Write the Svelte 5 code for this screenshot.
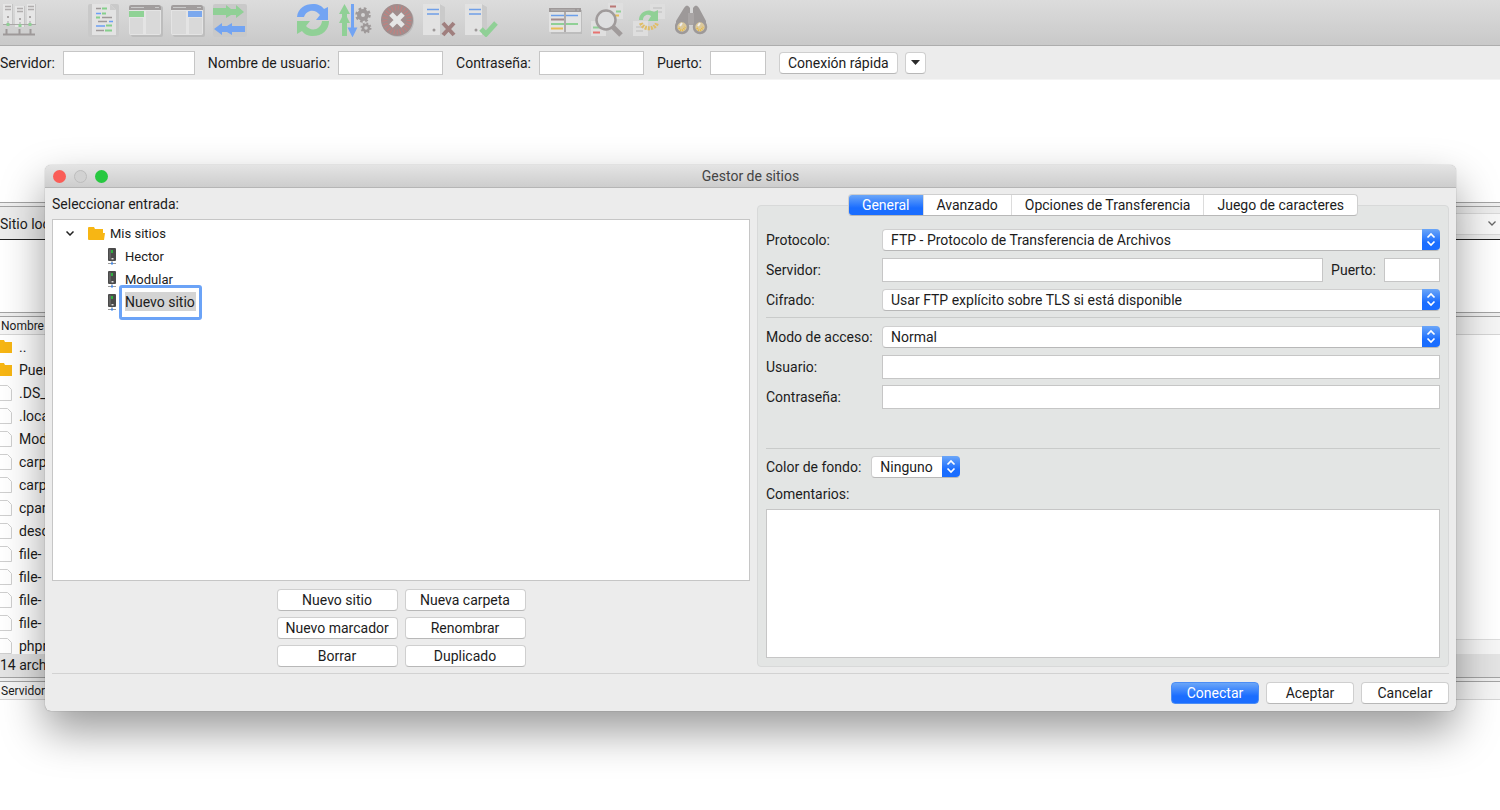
<script>
  const folders = ['..', 'Puer'];
  const files = ['.DS_', '.loca', 'Mod', 'carp', 'carp', 'cpan', 'desc', 'file-', 'file-', 'file-', 'file-', 'phpr'];
  const sites = ['Hector', 'Modular'];
  const tabs = ['General', 'Avanzado', 'Opciones de Transferencia', 'Juego de caracteres'];
  const siteActions = ['Nuevo sitio', 'Nueva carpeta', 'Nuevo marcador', 'Renombrar', 'Borrar', 'Duplicado'];

  let activeTab = $state('General');
  let siteName = $state('Nuevo sitio');
</script>

{#snippet updown()}
  <span class="updown">
    <svg viewBox="0 0 18 21" width="18" height="21" fill="none" stroke="#fff" stroke-width="1.700">
      <path d="m5.500 8.500 3.500-3.500 3.500 3.500M5.500 12.500 9 16l3.500-3.500" />
    </svg>
  </span>
{/snippet}

{#snippet serverIcon()}
  <svg class="server-icon" viewBox="0 0 10 17" width="10" height="17">
    <rect x="1" y="0" width="8" height="13" rx="1" fill="#4a4a4a" />
    <path d="M2.500 1.500h1v10h-1z" fill="#777" />
    <rect x="4" y="2" width="2" height="3" fill="#2fae3f" />
    <rect x="4.500" y="10" width="2" height="1.500" fill="#ddd" />
    <path d="M5 13v2M1 15.500h8" stroke="#999" />
    <rect x="4" y="14.500" width="2" height="2" fill="#4287e8" />
  </svg>
{/snippet}

<div class="app">
  <header class="toolbar">
    <div class="tools">
      <button aria-label="Gestor de sitios">
        <svg viewBox="0 0 34 34">
          <path d="M0 1h10v21H0zM12 3h10v21H12zM24 1h9v21h-9z" fill="#e6e6e6" />
          <path d="M9 1h1v21H9zM21 3h1v21h-1zM32 1h1v21h-1z" fill="#c5c5c5" />
          <path d="M2 3.500h6M2 6.500h6M14 5.500h6M14 8.500h6M25 3.500h6M25 6.500h6" stroke="#b0adad" stroke-width="1.500" />
          <path d="M5 18v4M17 19v4M27 18v4M0 21.500h33" stroke="#aaa7a7" />
          <path d="M4 13h2v2H4zM16 15h2v2h-2zM26 13h2v2h-2z" fill="#aaa7a7" />
          <path d="M3.500 20h3v3h-3zM15.500 21h3v3h-3zM25.500 20h3v3h-3z" fill="#90d096" />
          <path d="M0 31.500h32M3.500 26v5M16.500 26v5M27.500 26v5" stroke="#9e9999" stroke-width="2" />
        </svg>
      </button>
    </div>
    <div class="tools">
      <button aria-label="Registro de mensajes">
        <svg viewBox="0 0 34 34">
          <rect x="1" y="1" width="31" height="33" rx="2" fill="#c9c9c9" />
          <path d="M5 1h18l6 6v25H5z" fill="#e3e3e3" />
          <path d="M23 1v6h6z" fill="#cdcdcd" />
          <g fill="none" stroke-width="1.500">
            <path d="M9 5.500h5M11 18.500h9M15 14.500h10" stroke="#9e9999" />
            <path d="M15 5.500h5M15 10.500h4M19 22.500h6M9 14.500h4M18 27.500h7" stroke="#86cf8c" stroke-width="2" />
            <path d="M9 10.500h5M9 23h9M22 18.500h4" stroke="#6ca0f4" />
            <path d="M9 27.500h8" stroke="#9e9999" />
          </g>
        </svg>
      </button>
      <button aria-label="Árbol local">
        <svg viewBox="0 0 34 34">
          <rect x="2" y="3" width="32" height="31" rx="2" fill="#bdbdbd" />
          <rect y="2" width="32" height="30" rx="2" fill="#e4e4e4" />
          <path d="M0 7V4q0-2 2-2h28q2 0 2 2v3z" fill="#a19d9d" />
          <path d="M2 4.500h13M26 4.500h4" stroke="#c9c9c9" />
          <path d="M1 15h13v16H1zM17 8h14v23H17z" fill="#d9d9d9" />
          <path d="M0 8h15v6H0z" fill="#8fd295" />
        </svg>
      </button>
      <button aria-label="Árbol remoto">
        <svg viewBox="0 0 34 34">
          <rect x="2" y="3" width="32" height="31" rx="2" fill="#bdbdbd" />
          <rect y="2" width="32" height="30" rx="2" fill="#e4e4e4" />
          <path d="M0 7V4q0-2 2-2h28q2 0 2 2v3z" fill="#a19d9d" />
          <path d="M2 4.500h13M26 4.500h4" stroke="#c9c9c9" />
          <path d="M1 8h14v23H1zM18 15h13v16H18z" fill="#d9d9d9" />
          <path d="M17 8h14v6H17z" fill="#7ba8ee" />
        </svg>
      </button>
      <button aria-label="Cola de transferencias">
        <svg viewBox="0 0 34 34">
          <rect y="1" width="34" height="33" rx="2" fill="#c9c9c9" />
          <path d="M0 5h13V2l5 4h5V2l8 7-8 6v-3h-5l-5 3v-3H0z" fill="#90d096" />
          <path d="M32 23H19v-3l-5 3H9v-3l-8 6 8 6v-3h5l5 3v-3h13z" fill="#73a4f2" />
        </svg>
      </button>
    </div>
    <div class="tools">
      <button aria-label="Actualizar">
        <svg viewBox="0 0 34 34">
          <path d="M0 14C1 5 8 1 16 1c5 0 9 2 11 5l4-2v13H19l4-5c-5-7-14-5-16 2z" fill="#72a4f3" />
          <path d="M32 18c0 9-7 15-16 15-5 0-9-2-11-5l-5 3V18h13l-4 5c5 6 15 4 16-5z" fill="#90d096" />
        </svg>
      </button>
      <button aria-label="Procesar cola">
        <svg viewBox="0 0 34 34">
          <path d="M3 33V20H0l3-6v-3H0L5.500 1 11 11H8v3l3 6H8v13z" fill="#90d096" />
          <path d="M13.500 1v25M11 26l2.500 5 2.500-5z" stroke="#72a4f3" stroke-width="3" fill="#72a4f3" />
          <g fill="none" stroke="#9e9999">
            <circle cx="24" cy="12" r="4" stroke-width="4" />
            <circle cx="24" cy="12" r="6.500" stroke-width="2.500" stroke-dasharray="2.600 2.500" />
            <circle cx="27" cy="25" r="3" stroke-width="2.500" />
            <circle cx="27" cy="25" r="4.500" stroke-width="2" stroke-dasharray="1.800 1.700" />
          </g>
        </svg>
      </button>
      <button aria-label="Cancelar operación">
        <svg viewBox="0 0 34 34">
          <circle cx="17" cy="18" r="16" fill="#bcbcbc" />
          <circle cx="16" cy="17" r="16" fill="#a08d8d" />
          <circle cx="16" cy="17" r="12" fill="none" stroke="#c57f7d" stroke-width="5" stroke-dasharray="1 2" />
          <path d="m10 11 12 12m0-12L10 23" stroke="#e6e6e6" stroke-width="5" />
        </svg>
      </button>
      <button aria-label="Desconectar">
        <svg viewBox="0 0 34 34">
          <path d="M0 1h18l4 3v28H0z" fill="#e2e2e2" />
          <path d="M17 1l5 3v28h-5z" fill="#cacaca" />
          <path d="M4 6.500h12M4 11h12" stroke="#6f9fe8" stroke-width="1.500" />
          <circle cx="11" cy="27" r="1.500" fill="#9e9999" />
          <path d="m20 20 11 12m0-12L20 32" stroke="#a07f7e" stroke-width="4" />
        </svg>
      </button>
      <button aria-label="Reconectar">
        <svg viewBox="0 0 34 34">
          <path d="M0 1h18l4 3v28H0z" fill="#e2e2e2" />
          <path d="M17 1l5 3v28h-5z" fill="#cacaca" />
          <path d="M4 6.500h12M4 11h12" stroke="#6f9fe8" stroke-width="1.500" />
          <circle cx="11" cy="27" r="1.500" fill="#9e9999" />
          <path d="m16 26 5 5 10-11" fill="none" stroke="#90d096" stroke-width="5" />
        </svg>
      </button>
    </div>
    <div class="tools">
      <button aria-label="Comparar directorios">
        <svg viewBox="0 0 34 34">
          <rect x="2" y="7" width="31" height="24" fill="#bdbdbd" />
          <rect y="5" width="32" height="24" rx="1" fill="#e3e3e3" />
          <path d="M0 5h32v4H0z" fill="#9e9999" />
          <path d="M2 7h24M28 7h2" stroke="#bcb9b9" />
          <path d="M2 12.500h13M17 12.500h12" stroke="#6c9fea" stroke-width="1.500" />
          <path d="M2 16.500h13" stroke="#a38b8b" stroke-width="2" />
          <path d="M2 21h13M17 21h12" stroke="#90d096" stroke-width="2" />
          <path d="M2 25.500h12" stroke="#e7bd56" stroke-width="2" />
          <path d="M16 8v21" stroke="#9e9999" stroke-width="1.500" />
        </svg>
      </button>
      <button aria-label="Filtros de directorio">
        <svg viewBox="0 0 34 34">
          <path d="M17 0h15v16H17zM0 18h15v15H0z" fill="#dfdfdf" />
          <path d="M19 3.500h6" stroke="#ba7775" stroke-width="2" />
          <path d="M25 8.500h5M2 24.500h8" stroke="#90d096" stroke-width="2" />
          <path d="M24 12.500h4" stroke="#e7bd56" stroke-width="2" />
          <path d="M2 29.500h7" stroke="#e77370" stroke-width="2" />
          <circle cx="15" cy="17" r="9.500" fill="#dededf" stroke="#a09b9b" stroke-width="2.500" />
          <path d="m22 24 8 8" stroke="#a09b9b" stroke-width="5" />
        </svg>
      </button>
      <button aria-label="Navegación sincronizada">
        <svg viewBox="0 0 34 34">
          <path d="M17 1h15v15H17zM0 18h15v15H0z" fill="#dedede" />
          <path d="M20 5h9M20 9h9M3 24h7M3 28h7" stroke="#c8c8c8" stroke-width="1.500" />
          <path d="M6 17C6 9 15 5 21 9l4-2v11H15l3-5c-4-3-8 0-8 4z" fill="#90d096" />
          <path d="M8 20c2 7 14 7 16 0" fill="none" stroke="#e0bd67" stroke-width="4" stroke-dasharray="2 1" />
        </svg>
      </button>
      <button aria-label="Buscar archivos">
        <svg viewBox="0 0 34 34">
          <path d="M9 5q3-5 6 0v17H1v-4zM24 5q-3-5-6 0v17h13v-4z" fill="#9d9999" />
          <path d="M13 10h6v12h-6z" fill="#a9a5a5" />
          <circle cx="7" cy="24" r="6" fill="#dcc99b" stroke="#9d9999" stroke-width="2.500" />
          <circle cx="25" cy="24" r="6" fill="#dcc99b" stroke="#9d9999" stroke-width="2.500" />
          <path d="M4 25q3 5 6-1M22 25q3 5 6-1" fill="none" stroke="#e8b83e" stroke-width="2" stroke-dasharray="1 1" />
          <path d="m5 23 2-3m16 3 2-3" stroke="#eee" stroke-width="2" />
        </svg>
      </button>
    </div>
  </header>

  <form class="quickbar">
    <label>Servidor: <input class="host" type="text" /></label>
    <label>Nombre de usuario: <input class="user" type="text" /></label>
    <label>Contraseña: <input class="user" type="password" /></label>
    <label>Puerto: <input class="port" type="text" /></label>
    <div class="quick-buttons">
      <button class="btn quick" type="button">Conexión rápida</button>
      <button class="btn history" type="button" aria-label="Conexiones recientes">
        <svg viewBox="0 0 9 5" width="9" height="5"><path d="M0 0h9L4.500 5z" fill="#2b2b2b" /></svg>
      </button>
    </div>
  </form>

  <div class="log"></div>

  <main class="panes">
    <section class="pane">
      <div class="site-bar"><span>Sitio loc</span></div>
      <div class="dir-tree"></div>
      <div class="list-head">Nombre</div>
      <ul class="files">
        {#each folders as name}
          <li>
            <svg viewBox="0 0 12 14" width="12" height="14"><path d="M0 0h4l1 2h7v11H0z" fill="#f7b614" /></svg>
            {name}
          </li>
        {/each}
        {#each files as name}
          <li>
            <svg viewBox="0 0 12 16" width="12" height="16"><path d="M0 .5h7.500l4 4v11H0" fill="#fff" stroke="#cfcfcf" /></svg>
            {name}
          </li>
        {/each}
      </ul>
      <div class="status">14 arch</div>
    </section>
    <section class="pane">
      <div class="site-bar remote">
        <button class="combo" aria-label="Sitio remoto">
          <svg viewBox="0 0 8 5" width="8" height="5"><path d="m.5.500 3.500 3.500L7.500.500" fill="none" stroke="#666" stroke-width="1.300" /></svg>
        </button>
      </div>
      <div class="dir-tree"></div>
      <div class="list-head"></div>
      <div class="files remote-files"></div>
      <div class="status"></div>
    </section>
  </main>

  <div class="queue-head">Servidor</div>

  <div class="dialog" role="dialog" aria-labelledby="dialog-title">
    <div class="titlebar">
      <div class="lights">
        <button class="light close" aria-label="Cerrar"></button>
        <button class="light minimize" aria-label="Minimizar" disabled></button>
        <button class="light zoom" aria-label="Ampliar"></button>
      </div>
      <h1 id="dialog-title">Gestor de sitios</h1>
    </div>

    <div class="dialog-body">
      <section class="entries">
        <h2>Seleccionar entrada:</h2>
        <div class="tree">
          <div class="node root">
            <svg viewBox="0 0 8 5" width="8" height="5"><path d="m.5.500 3.500 3.500L7.500.500" fill="none" stroke="#222" stroke-width="1.500" /></svg>
            <svg class="folder" viewBox="0 0 17 14" width="17" height="14">
              <path d="M0 1q0-1 1-1h5l1 2h8v4h2l-1 7H1q-1 0-1-1z" fill="#f7b614" />
            </svg>
            Mis sitios
          </div>
          <ul>
            {#each sites as site}
              <li class="node">{@render serverIcon()}<span>{site}</span></li>
            {/each}
            <li class="node editing">
              {@render serverIcon()}
              <input type="text" aria-label="Nombre del sitio" bind:value={siteName} />
            </li>
          </ul>
        </div>
        <div class="site-actions">
          {#each siteActions as action}
            <button class="btn">{action}</button>
          {/each}
        </div>
      </section>

      <section class="settings">
        <div class="tabs" role="tablist">
          {#each tabs as tab}
            <button role="tab" class:active={tab === activeTab} aria-selected={tab === activeTab} onclick={() => (activeTab = tab)}>{tab}</button>
          {/each}
        </div>
        <div class="panel" role="tabpanel">
          <div class="fields">
            <label for="protocol">Protocolo:</label>
            <div class="select">
              <select id="protocol"><option>FTP - Protocolo de Transferencia de Archivos</option></select>
              {@render updown()}
            </div>
            <label for="host">Servidor:</label>
            <div class="host-row">
              <input id="host" type="text" />
              <label for="port">Puerto:</label>
              <input id="port" class="port" type="text" />
            </div>
            <label for="encryption">Cifrado:</label>
            <div class="select">
              <select id="encryption"><option>Usar FTP explícito sobre TLS si está disponible</option></select>
              {@render updown()}
            </div>
          </div>
          <hr />
          <div class="fields login">
            <label for="logon">Modo de acceso:</label>
            <div class="select">
              <select id="logon"><option>Normal</option></select>
              {@render updown()}
            </div>
            <label for="user">Usuario:</label>
            <input id="user" type="text" />
            <label for="password">Contraseña:</label>
            <input id="password" type="password" />
          </div>
          <hr />
          <div class="color-row">
            <label for="color">Color de fondo:</label>
            <div class="select small">
              <select id="color"><option>Ninguno</option></select>
              {@render updown()}
            </div>
          </div>
          <label class="comments-label" for="comments">Comentarios:</label>
          <textarea id="comments"></textarea>
        </div>
      </section>
    </div>

    <footer>
      <button class="btn primary">Conectar</button>
      <button class="btn">Aceptar</button>
      <button class="btn">Cancelar</button>
    </footer>
  </div>
</div>

<style>
  :global(body) {
    margin: 0;
    background: #fff;
  }

  .app {
    position: relative;
    min-height: 100vh;
    overflow: hidden;
    font-family: Roboto, 'Liberation Sans', sans-serif;
    font-size: 14px;
    line-height: 20px;
    color: #1c1c1c;
  }

  .app *, .app {
    box-sizing: border-box;
  }

  button, input, select, textarea {
    font: inherit;
    color: inherit;
    margin: 0;
  }

  ul {
    list-style: none;
    margin: 0;
    padding: 0;
  }

  /* Barra de herramientas */
  .toolbar {
    display: flex;
    gap: 50px;
    height: 46px;
    padding: 3px;
    background: linear-gradient(#dcdcdc, #c9c9c9);
    border-bottom: 1px solid #adadad;
  }

  .tools {
    display: flex;
    gap: 8px;
  }

  .tools button {
    width: 34px;
    height: 34px;
    padding: 0;
    border: 0;
    background: none;
  }

  .tools svg {
    display: block;
    width: 34px;
    height: 34px;
  }

  /* Conexión rápida */
  .quickbar {
    display: flex;
    align-items: center;
    gap: 13px;
    height: 34px;
    background: #ececec;
    border-bottom: 1px solid #f4f4f4;
  }

  .quickbar label {
    display: flex;
    align-items: center;
    gap: 8px;
    white-space: nowrap;
  }

  input[type='text'], input[type='password'] {
    height: 24px;
    padding: 0 6px;
    border: 1px solid #c6c6c6;
    background: #fff;
    outline: none;
  }

  .quickbar .host { width: 132px; }
  .quickbar .user { width: 105px; }
  .port { width: 56px; }

  .quick-buttons {
    display: flex;
    gap: 7px;
  }

  .btn {
    height: 22px;
    padding: 0 8px;
    border: 1px solid #cfcfcf;
    border-bottom-color: #b8b8b8;
    border-radius: 4px;
    background: #fff;
    line-height: 18px;
    white-space: nowrap;
  }

  .quick {
    width: 119px;
    padding: 0;
  }

  .history {
    display: flex;
    align-items: center;
    justify-content: center;
    width: 21px;
    padding: 0;
  }

  .log {
    height: 122px;
  }

  /* Paneles local y remoto */
  .panes {
    display: flex;
  }

  .pane {
    flex: 1;
    min-width: 0;
  }

  .site-bar {
    display: flex;
    align-items: center;
    height: 38px;
    padding-top: 5px;
    border-top: 1px solid #a3a3a3;
    border-bottom: 1px solid #222;
    background: linear-gradient(#efefef 3px, #a3a3a3 3px, #a3a3a3 4px, #ececec 4px);
  }

  .remote {
    justify-content: flex-end;
  }

  .combo {
    display: flex;
    align-items: center;
    justify-content: flex-end;
    width: 80%;
    height: 22px;
    padding: 0 4px;
    border: 1px solid #d8d8d8;
    border-right: 0;
    background: #f7f7f7;
  }

  .dir-tree {
    height: 72px;
  }

  .list-head, .queue-head {
    height: 23px;
    padding: 5px 1px 0;
    border-top: 1px solid #a3a3a3;
    border-bottom: 1px solid #d5d5d5;
    background: linear-gradient(#efefef 3px, #a3a3a3 3px, #a3a3a3 4px, #f5f5f5 4px);
    font-size: 12px;
    line-height: 17px;
  }

  .files {
    height: 319px;
    overflow: hidden;
  }

  .files li {
    display: flex;
    align-items: center;
    gap: 7px;
    height: 23px;
  }

  .remote-files {
    background: linear-gradient(#fff 304px, #ddd 304px, #ddd 305px, #f6f6f6 305px);
  }

  .status {
    height: 23px;
    padding: 1px 0;
    background: #e4e4e4;
  }

  /* Gestor de sitios */
  .dialog {
    position: absolute;
    top: 165px;
    left: 45px;
    right: 44px;
    border-radius: 6px;
    background: #ececec;
    box-shadow: 0 0 1px rgba(0, 0, 0, 0.5), 0 20px 44px rgba(0, 0, 0, 0.4);
  }

  .titlebar {
    display: grid;
    grid-template-columns: 1fr auto 1fr;
    align-items: center;
    height: 23px;
    padding: 0 8px;
    border-bottom: 1px solid #b5b5b5;
    border-radius: 6px 6px 0 0;
    background: linear-gradient(#e4e4e4, #cdcdcd);
  }

  .lights {
    display: flex;
    gap: 8px;
  }

  .light {
    width: 13px;
    height: 13px;
    padding: 0;
    border: 0;
    border-radius: 50%;
  }

  .close { background: #fa5d57; }
  .minimize { background: #d2d2d2; border: 1px solid #bdbdbd; }
  .zoom { background: #27c840; }

  h1, h2 {
    margin: 0;
    font-size: 14px;
    font-weight: 400;
  }

  h1 {
    color: #444;
  }

  .dialog-body {
    display: grid;
    grid-template-columns: 698fr 692fr;
    gap: 7px;
    margin: 0 7px;
    padding: 6px 0;
    border-bottom: 1px solid #d2d2d2;
  }

  .entries {
    display: flex;
    flex-direction: column;
  }

  .tree {
    flex: 1;
    min-height: 362px;
    margin-top: 5px;
    padding: 2px 13px;
    border: 1px solid #c6c6c6;
    background: #fff;
  }

  .node {
    display: flex;
    align-items: center;
    gap: 8px;
    height: 23px;
    font-size: 13px;
  }

  .root {
    gap: 5px;
  }

  .root .folder {
    margin-left: 9px;
  }

  .tree ul {
    padding-left: 41px;
  }

  .editing {
    gap: 2px;
    font-size: 14px;
  }

  .editing input[type='text'] {
    width: 83px;
    height: 35px;
    padding: 4px 3px 6px;
    border: 3px solid #6ba3f7;
    border-radius: 3px;
    background: linear-gradient(#d4d4d4, #d4d4d4) content-box, #fff;
  }

  .site-actions {
    display: grid;
    grid-template-columns: 121px 121px;
    justify-content: center;
    gap: 6px 7px;
    margin-top: 8px;
  }

  .settings {
    display: flex;
    flex-direction: column;
  }

  .tabs {
    z-index: 1;
    display: flex;
    align-self: center;
    height: 22px;
    border: 1px solid #cfcfcf;
    border-bottom-color: #b8b8b8;
    border-radius: 4px;
    background: #fff;
    overflow: hidden;
  }

  .tabs button {
    padding: 0 13px;
    border: 0;
    border-left: 1px solid #dcdcdc;
    background: none;
    white-space: nowrap;
  }

  .tabs button:first-child {
    border-left: 0;
  }

  .tabs .active, .primary {
    background: linear-gradient(#6ba6f8, #1a6dff 65%);
    color: #fff;
  }

  .panel {
    flex: 1;
    display: flex;
    flex-direction: column;
    margin-top: -11px;
    padding: 22px 8px 8px;
    border: 1px solid #d8d9d9;
    border-radius: 4px;
    background: #e3e5e4;
  }

  .fields {
    display: grid;
    grid-template-columns: 116px 1fr;
    grid-auto-rows: 24px;
    align-items: center;
    row-gap: 6px;
  }

  .host-row {
    display: flex;
    align-items: center;
    gap: 8px;
  }

  #host {
    flex: 1;
    min-width: 0;
  }

  hr {
    width: 100%;
    margin: 5px 0 7px;
    border: 0;
    border-top: 1px solid #c9cbca;
  }

  .login {
    padding-bottom: 34px;
  }

  .select {
    position: relative;
    display: flex;
  }

  select {
    width: 100%;
    height: 22px;
    padding: 0 24px 0 8px;
    border: 1px solid #cfcfcf;
    border-bottom-color: #b8b8b8;
    border-radius: 4px;
    background: #fff;
    line-height: 18px;
    appearance: none;
    outline: none;
  }

  /* Flechas azules sobre el extremo del desplegable */
  .updown {
    position: absolute;
    top: 0;
    right: 0;
    height: 21px;
    border-radius: 0 4px 4px 0;
    background: linear-gradient(#6ba6f8, #1a6dff 65%);
    pointer-events: none;
  }

  .updown svg {
    display: block;
  }

  .color-row {
    display: flex;
    align-items: center;
    gap: 10px;
  }

  .small {
    width: 89px;
  }

  .comments-label {
    margin: 6px 0 5px;
  }

  textarea {
    flex: 1;
    min-height: 147px;
    border: 1px solid #c6c6c6;
    background: #fff;
    outline: none;
    resize: none;
  }

  footer {
    display: flex;
    justify-content: flex-end;
    gap: 7px;
    padding: 8px 7px 7px;
  }

  footer .btn {
    width: 88px;
  }

  .primary {
    border-color: #4b8df5;
  }
</style>
